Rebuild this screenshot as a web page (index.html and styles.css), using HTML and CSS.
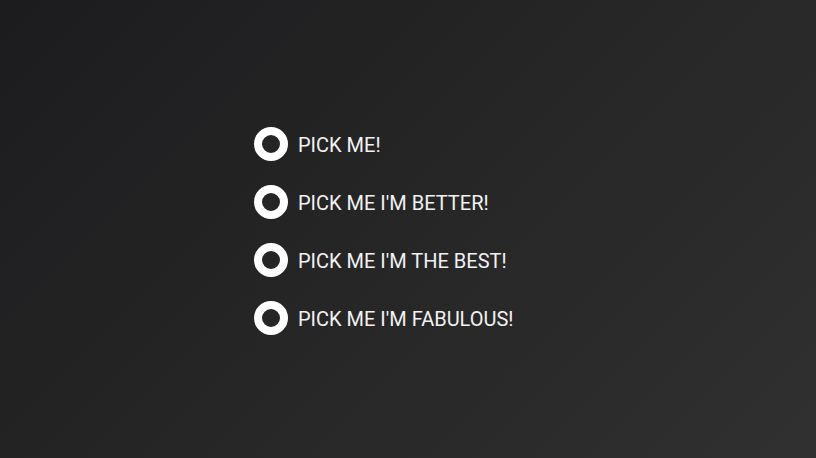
FILE: index.html
```html
<!DOCTYPE html>
<html>
<head>
<meta charset="utf-8">
<link rel="stylesheet" href="styles.css">
</head>
<body>
<div class="page">
  <form class="options">
    <label class="option"><input type="radio" name="pick"><span class="dot"></span><span class="text">PICK ME!</span></label>
    <label class="option"><input type="radio" name="pick"><span class="dot"></span><span class="text">PICK ME I'M BETTER!</span></label>
    <label class="option"><input type="radio" name="pick"><span class="dot"></span><span class="text">PICK ME I'M THE BEST!</span></label>
    <label class="option"><input type="radio" name="pick"><span class="dot"></span><span class="text">PICK ME I'M FABULOUS!</span></label>
  </form>
</div>
</body>
</html>
```
FILE: styles.css
```css
html, body {
  margin: 0;
  padding: 0;
}
body {
  width: 816px;
  height: 458px;
  overflow: hidden;
  background: linear-gradient(135deg, #1c1c1e 0%, #262627 50%, #303030 100%);
  font-family: Roboto, "Liberation Sans", sans-serif;
}
.page {
  height: 458px;
  box-sizing: border-box;
  padding: 127px 0 0 254px;
}
.options {
  display: flex;
  flex-direction: column;
  gap: 24px;
  margin: 0;
}
.option {
  display: flex;
  align-items: center;
  gap: 10px;
  height: 34px;
  cursor: pointer;
}
.option input {
  display: none;
}
.dot {
  width: 18px;
  height: 18px;
  border: 8px solid #ffffff;
  border-radius: 50%;
  background: #252526;
  flex: none;
}
.text {
  color: #f2f2f2;
  font-size: 20px;
  line-height: 24px;
  font-weight: 400;
  padding-top: 1px;
}
```
